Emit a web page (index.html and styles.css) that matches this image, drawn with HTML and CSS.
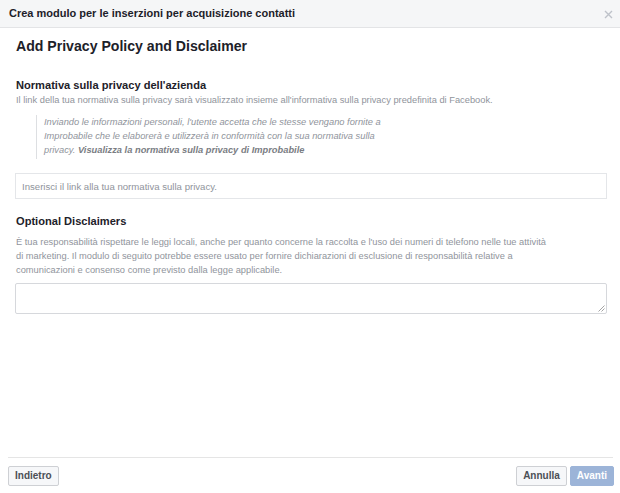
FILE: index.html
```html
<!DOCTYPE html>
<html lang="it">
<head>
<meta charset="utf-8">
<title>Crea modulo</title>
<link rel="stylesheet" href="styles.css">
</head>
<body>
<div class="dialog">
  <div class="header">
    <span class="header-title">Crea modulo per le inserzioni per acquisizione contatti</span>
    <svg class="close" width="9" height="9" viewBox="0 0 9 9"><path d="M1 1L8 8M8 1L1 8" stroke="#bec2c9" stroke-width="1.4" fill="none"/></svg>
  </div>
  <div class="body">
    <h1 class="title">Add Privacy Policy and Disclaimer</h1>
    <h2 class="section-title first">Normativa sulla privacy dell'azienda</h2>
    <p class="sub">Il link della tua normativa sulla privacy sarà visualizzato insieme all'informativa sulla privacy predefinita di Facebook.</p>
    <div class="quote"><span class="q-text">Inviando le informazioni personali, l'utente accetta che le stesse vengano fornite a Improbabile che le elaborerà e utilizzerà in conformità con la sua normativa sulla privacy.</span> <b class="q-link">Visualizza la normativa sulla privacy di Improbabile</b></div>
    <div class="input"><span class="placeholder">Inserisci il link alla tua normativa sulla privacy.</span></div>
    <h2 class="section-title">Optional Disclaimers</h2>
    <p class="sub para">È tua responsabilità rispettare le leggi locali, anche per quanto concerne la raccolta e l'uso dei numeri di telefono nelle tue attività<br>di marketing. Il modulo di seguito potrebbe essere usato per fornire dichiarazioni di esclusione di responsabilità relative a comunicazioni e consenso come previsto dalla legge applicabile.</p>
    <div class="textarea">
      <svg class="grip" width="7" height="7" viewBox="0 0 7 7"><path d="M6.5 0.5L0.5 6.5M6.5 3.5L3.5 6.5" stroke="#9a9a9a" stroke-width="0.9" fill="none"/></svg>
    </div>
  </div>
  <div class="footer">
    <button class="btn">Indietro</button>
    <div class="right">
      <button class="btn">Annulla</button>
      <button class="btn primary">Avanti</button>
    </div>
  </div>
</div>
</body>
</html>
```

FILE: styles.css
```css
* { box-sizing: border-box; }
html, body { margin: 0; padding: 0; background: #fff; }
body { font-family: "Liberation Sans", Arial, sans-serif; color: #1d2129; }

.dialog {
  width: 620px;
  height: 493px;
  display: flex;
  flex-direction: column;
}

.header {
  height: 28px;
  background: #f5f6f7;
  border-bottom: 1px solid #e3e4e6;
  display: flex;
  align-items: center;
  justify-content: space-between;
  padding: 0 7px 1px 9px;
}
.header-title {
  font-size: 11px;
  font-weight: bold;
  color: #1d2129;
}
.close { display: block; margin-top: 2px; }

.body {
  flex: 1;
  padding: 0 13px 0 16px;
}

.title {
  margin: 9px 0 0;
  font-size: 14.1px;
  line-height: 18px;
  font-weight: bold;
  color: #1d2129;
}

.section-title {
  margin: 15px 0 0;
  font-size: 11.1px;
  line-height: 15px;
  font-weight: bold;
  color: #1d2129;
}
.section-title.first { margin-top: 23px; }

.sub {
  margin: 0;
  font-size: 9.3px;
  line-height: 14px;
  color: #90949c;
}
.para { margin-top: 6px; max-width: 540px; }

.quote {
  margin: 8px 0 0 20px;
  width: 350px;
  border-left: 1px solid #dddfe2;
  padding: 0 0 2px 7px;
  font-size: 9.3px;
  line-height: 14px;
  font-style: italic;
  color: #90949c;
}
.q-link { color: #7a7d83; }

.input {
  margin: 14px 0 0 -1px;
  height: 26px;
  border: 1px solid #e4e6e9;
  display: flex;
  align-items: center;
  padding-left: 6px;
}
.placeholder {
  font-size: 9.6px;
  color: #90949c;
}

.textarea {
  margin: 6px 0 0 -1px;
  height: 31px;
  border: 1px solid #d6d8dc;
  border-radius: 2px;
  position: relative;
}
.grip { position: absolute; right: 1px; bottom: 1px; }

.footer {
  margin: 0 7px 0 8px;
  border-top: 1px solid #e5e5e5;
  padding: 8px 0 7px;
  display: flex;
  justify-content: space-between;
  align-items: center;
}
.right { display: flex; gap: 3px; margin-right: -1px; }

.btn {
  font-family: "Liberation Sans", Arial, sans-serif;
  font-size: 10px;
  font-weight: bold;
  color: #4b4f56;
  background: #f6f7f9;
  border: 1px solid #ced0d4;
  border-radius: 2px;
  height: 20px;
  padding: 0 6px;
  line-height: 18px;
}
.btn.primary {
  background: #9cb4d8;
  border-color: #9cb4d8;
  color: #fff;
}
```
